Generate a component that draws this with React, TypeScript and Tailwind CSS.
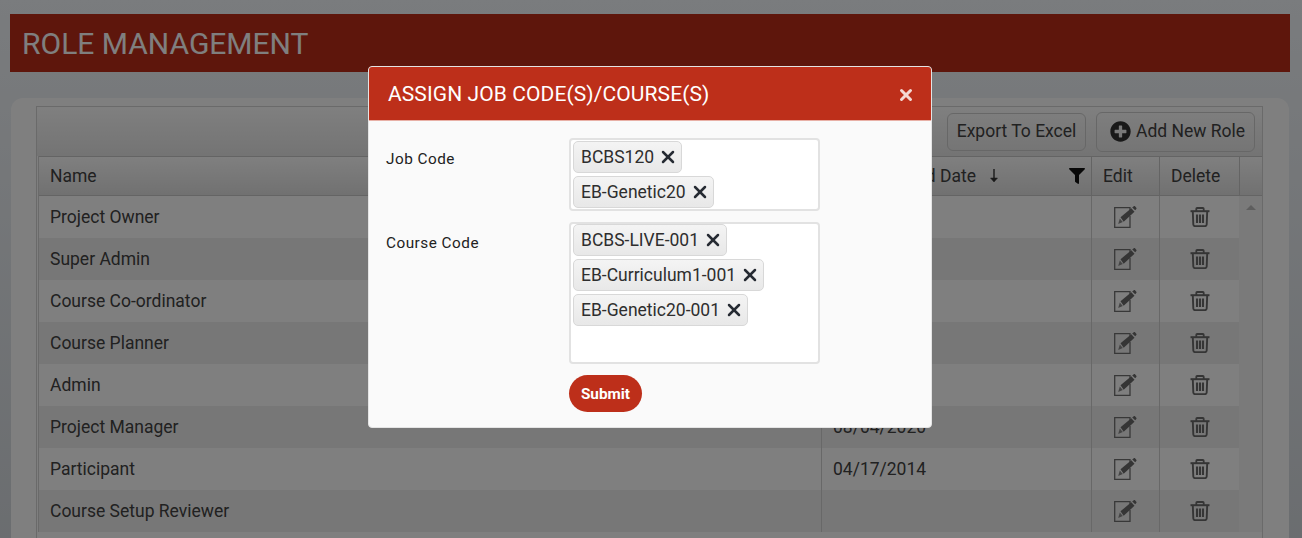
import React from 'react';
import { X } from 'lucide-react';
import { FaFilter, FaPlusCircle } from 'react-icons/fa';

interface Role {
    name: string;
    date: string;
}

const roles: Role[] = [
    { name: 'Project Owner', date: '' },
    { name: 'Super Admin', date: '' },
    { name: 'Course Co-ordinator', date: '' },
    { name: 'Course Planner', date: '' },
    { name: 'Admin', date: '' },
    { name: 'Project Manager', date: '08/04/2020' },
    { name: 'Participant', date: '04/17/2014' },
    { name: 'Course Setup Reviewer', date: '' },
];

const EditIcon = () => (
    <svg width="23" height="22" viewBox="0 0 23 22" fill="none">
        <path d="M16 5V1.7H.7v19.6H16V10" stroke="#707070" strokeWidth="1.3" />
        <path d="M6.5 11.3L17.3 2.2l3.2 3.6-10.8 9.9z" fill="#6a6a6a" />
        <path d="M5.8 12.4l3 3.5-4.6 2z" fill="#8a8a8a" />
        <path d="M18.2 1.4L19.8.2c.4-.3.9-.2 1.2.1l1.3 1.5c.3.4.3.9 0 1.2l-1.1 1.3z" fill="#6a6a6a" />
    </svg>
);

const TrashIcon = () => (
    <svg width="20" height="20" viewBox="0 0 20 20" fill="none" stroke="#6a6a6a">
        <path d="M0.5 4.2h19" strokeWidth="2" />
        <path d="M6.3 4V1.8a.8.8 0 0 1 .8-.8h5.8a.8.8 0 0 1 .8.8V4" strokeWidth="1.8" />
        <path d="M2.8 4.5l.5 13a1.8 1.8 0 0 0 1.8 1.6h9.8a1.8 1.8 0 0 0 1.8-1.6l.5-13" strokeWidth="1.9" />
        <path d="M7 7.5v8.5M10 7.5v8.5M13 7.5v8.5" strokeWidth="2.1" />
    </svg>
);

const Chip = ({ label }: { label: string }) => (
    <div className="flex h-[32px] w-fit items-center rounded-[5px] border border-[#d8d8d8] bg-gradient-to-b from-[#f4f4f4] to-[#e8e8e8] pl-[7px] pr-[3px] text-[17.5px] text-[#2e2e2e]">
        <span>{label}</span>
        <X size={20} strokeWidth={3} className="ml-[4px] text-[#262b33]" />
    </div>
);

const App = () => {
    return (
        <div className="relative h-[538px] w-[1302px] overflow-hidden bg-gradient-to-b from-[#f4f8fc] to-[#d6dbe0] pt-[14px] font-['Roboto',sans-serif]">
            <div className="ml-[10px] flex h-[58px] w-[1280px] items-center bg-[#bd2c19] pl-[12px] text-[30px] text-white">
                ROLE MANAGEMENT
            </div>

            <div className="ml-[11px] mt-[26px] h-[500px] w-[1278px] rounded-[12px] bg-[#ffffff] pl-[25px] pt-[8px]">
                <div className="h-[480px] w-[1227px] border border-[#d4d4d4]">
                    {/* Toolbar */}
                    <div className="flex h-[49px] items-center justify-end gap-[10px] bg-gradient-to-b from-[#ffffff] to-[#e8e8e8] pr-[7px]">
                        <button className="h-[38px] w-[139px] rounded-[6px] border border-[#cfcfcf] text-[17.5px] text-[#424242]">
                            Export To Excel
                        </button>
                        <button className="flex h-[40px] w-[159px] items-center justify-center gap-[5px] rounded-[6px] border border-[#cfcfcf] pl-[4px] text-[17.5px] text-[#424242]">
                            <FaPlusCircle size={21} className="text-[#333]" />
                            Add New Role
                        </button>
                    </div>

                    {/* Table */}
                    <div className="ml-[1px] border-l border-[#d4d4d4]">
                        <div className="flex h-[40px] items-center border-y border-[#c8c8c8] bg-gradient-to-b from-[#ffffff] to-[#e2e2e2] text-[17.5px] text-[#424242]">
                            <div className="w-[782px] pl-[11px]">Name</div>
                            <div className="flex h-full w-[270px] items-center border-l border-[#c8c8c8] pl-[11px]">
                                <span className="flex w-[143px] justify-end whitespace-nowrap">Last Modified Date</span>
                                <svg width="10" height="14" viewBox="0 0 10 14" className="ml-[13px]" fill="none" stroke="#333">
                                    <path d="M5 0v12" strokeWidth="1.4" />
                                    <path d="M1.5 9L5 13l3.5-4z" fill="#333" strokeWidth="0.5" />
                                </svg>
                                <FaFilter size={16} className="ml-auto mr-[6px] text-[#111]" />
                            </div>
                            <div className="flex h-full w-[68px] items-center border-l border-[#c8c8c8] pl-[11px]">Edit</div>
                            <div className="flex h-full w-[80px] items-center border-l border-[#c8c8c8] pl-[11px]">Delete</div>
                            <div className="h-full w-[23px] border-l border-[#c8c8c8]" />
                        </div>

                        <div className="flex">
                            <div className="w-[1200px]">
                                {roles.map((role, i) => (
                                    <div
                                        key={role.name}
                                        className={`flex h-[42px] text-[17.5px] text-[#424242] ${i % 2 === 0 ? 'bg-[#ffffff]' : 'bg-[#efefef]'}`}
                                    >
                                        <div className="w-[782px] pl-[11px] pt-[8px]">{role.name}</div>
                                        <div className="w-[270px] border-l border-[#d0d0d0] pl-[11px] pt-[8px]">{role.date}</div>
                                        <div className="flex w-[68px] items-center justify-center border-l border-[#d0d0d0]">
                                            <EditIcon />
                                        </div>
                                        <div className="flex w-[80px] items-center justify-center border-l border-[#d0d0d0]">
                                            <TrashIcon />
                                        </div>
                                    </div>
                                ))}
                            </div>
                            <div className="flex h-[336px] w-[23px] justify-center bg-[#f5f5f5] pt-[9px]">
                                <div className="h-0 w-0 border-x-[5px] border-b-[5px] border-x-transparent border-b-[#bdbdbd]" />
                            </div>
                        </div>
                    </div>
                </div>
            </div>

            {/* Backdrop and dialog */}
            <div className="absolute inset-0 bg-black/50">
                <div className="ml-[368px] mt-[66px] h-[362px] w-[564px] overflow-hidden rounded-[4px] border border-[#e4e4e4] bg-[#fafafa]">
                    <div className="flex h-[54px] items-center justify-between border-b border-[#e8b0a6] bg-[#bd2f1a] pl-[19px] pr-[16px] pt-[2px] text-[21px] tracking-[0.1px] text-white">
                        <span>ASSIGN JOB CODE(S)/COURSE(S)</span>
                        <X size={18} strokeWidth={4} className="text-[#f4d9d4]" />
                    </div>
                    <div className="pl-[17px] pt-[17px]">
                        <div className="flex">
                            <div className="w-[183px] pt-[10px] text-[15.3px] tracking-[0.5px] text-[#222]">Job Code</div>
                            <div className="flex h-[73px] w-[251px] flex-col gap-[3px] rounded-[4px] border-2 border-[#e2e2e2] bg-white pl-[2px] pt-[1px]">
                                <Chip label="BCBS120" />
                                <Chip label="EB-Genetic20" />
                            </div>
                        </div>
                        <div className="mt-[11px] flex">
                            <div className="w-[183px] pt-[10px] text-[15.3px] tracking-[0.5px] text-[#222]">Course Code</div>
                            <div className="flex h-[142px] w-[251px] flex-col gap-[3px] rounded-[4px] border-2 border-[#e2e2e2] bg-white pl-[2px]">
                                <Chip label="BCBS-LIVE-001" />
                                <Chip label="EB-Curriculum1-001" />
                                <Chip label="EB-Genetic20-001" />
                            </div>
                        </div>
                        <button className="ml-[183px] mt-[11px] h-[37px] w-[73px] rounded-full bg-[#bd2f1a] pt-[1px] text-[15.3px] font-bold text-white">
                            Submit
                        </button>
                    </div>
                </div>
            </div>
        </div>
    );
};

export default App;
